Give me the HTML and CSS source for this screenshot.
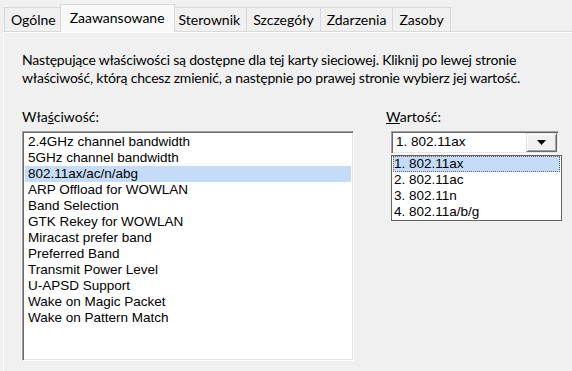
FILE: index.html
```html
<!DOCTYPE html>
<html lang="pl">
<head>
  <meta charset="UTF-8">
  <title>Właściwości karty sieciowej</title>
  <link rel="stylesheet" href="styles.css">
</head>
<body>
  <div class="tabs">
    <div class="tab">Ogólne</div>
    <div class="tab active">Zaawansowane</div>
    <div class="tab">Sterownik</div>
    <div class="tab">Szczegóły</div>
    <div class="tab">Zdarzenia</div>
    <div class="tab">Zasoby</div>
  </div>
  <div class="panel">
    <p class="intro">Następujące właściwości są dostępne dla tej karty sieciowej. Kliknij po lewej stronie właściwość, którą chcesz zmienić, a następnie po prawej stronie wybierz jej wartość.</p>
    <div class="columns">
      <div class="col-left">
        <div class="label">Wła<u>ś</u>ciwość:</div>
        <div class="listbox">
          <div class="item">2.4GHz channel bandwidth</div>
          <div class="item">5GHz channel bandwidth</div>
          <div class="item selected">802.11ax/ac/n/abg</div>
          <div class="item">ARP Offload for WOWLAN</div>
          <div class="item">Band Selection</div>
          <div class="item">GTK Rekey for WOWLAN</div>
          <div class="item">Miracast prefer band</div>
          <div class="item">Preferred Band</div>
          <div class="item">Transmit Power Level</div>
          <div class="item">U-APSD Support</div>
          <div class="item">Wake on Magic Packet</div>
          <div class="item">Wake on Pattern Match</div>
        </div>
      </div>
      <div class="col-right">
        <div class="label"><u>W</u>artość:</div>
        <div class="combo">
          <div class="combo-value">1. 802.11ax</div>
          <div class="combo-btn">
            <svg width="9" height="5" viewBox="0 0 9 5"><path d="M0 0h9L4.5 5z" fill="#000"/></svg>
          </div>
          <div class="dropdown">
            <div class="opt selected">1. 802.11ax</div>
            <div class="opt">2. 802.11ac</div>
            <div class="opt">3. 802.11n</div>
            <div class="opt">4. 802.11a/b/g</div>
          </div>
        </div>
      </div>
    </div>
  </div>
</body>
</html>
```

FILE: styles.css
```css
* {
  box-sizing: border-box;
}
body {
  margin: 0;
  background: #f0f0f0;
  color: #000;
  font-family: Lato, sans-serif;
  font-size: 14px;
  width: 572px;
  height: 371px;
  overflow: hidden;
}
.tabs {
  display: flex;
  align-items: flex-end;
  padding: 4px 0 0 4px;
  height: 31px;
}
.tab {
  height: 24px;
  padding: 0 6px;
  line-height: 24px;
  border: 1px solid #d9d9d9;
  border-bottom: none;
  border-left: none;
  background: #f0f0f0;
}
.tab:first-child {
  border-left: 1px solid #d9d9d9;
}
.tab.wide {
  padding: 0 7px;
}
.tab.active {
  height: 28px;
  margin: 0 -2px -1px -3px;
  padding: 0 9px;
  line-height: 25px;
  background: #f9f9f9;
  border-left: 1px solid #d9d9d9;
  position: relative;
  z-index: 1;
}
.panel {
  border-top: 1px solid #d9d9d9;
  border-left: 1px solid #fff;
  margin-left: 3px;
  box-shadow: inset 0 1px 0 #fff;
  height: 340px;
  padding: 19px 0 0 18px;
}
.intro {
  margin: 0;
  line-height: 18px;
  width: 530px;
  letter-spacing: -0.2px;
}
.columns {
  display: flex;
  gap: 32px;
  margin-top: 21px;
}
.col-left {
  width: 332px;
}
.col-right {
  width: 175px;
}
.label {
  line-height: 18px;
  margin-bottom: 5px;
}
.listbox {
  height: 230px;
  background: #fff;
  border-style: solid;
  border-width: 1px;
  border-color: #a0a0a0 #fff #fff #a0a0a0;
  box-shadow: inset 1px 1px 0 #696969, inset -1px -1px 0 #e3e3e3;
  padding: 2px 2px;
  font-family: 'Liberation Sans', Arial, sans-serif;
  font-size: 13.5px;
}
.item {
  height: 16px;
  line-height: 16px;
  padding-left: 3px;
}
.item.selected {
  background: #c4dcf8;
}
.combo {
  position: relative;
  margin-left: 5px;
  height: 23px;
  width: 168px;
  display: flex;
  background: #fff;
  border-style: solid;
  border-width: 1px;
  border-color: #a0a0a0 #fff #fff #a0a0a0;
  box-shadow: inset 1px 1px 0 #696969, inset -1px -1px 0 #e3e3e3;
  font-family: 'Liberation Sans', Arial, sans-serif;
  font-size: 13.5px;
}
.combo-value {
  flex: 1;
  line-height: 20px;
  padding-left: 4px;
}
.combo-btn {
  width: 31px;
  margin: 1px 1px 1px 0;
  background: #f0f0f0;
  border-style: solid;
  border-width: 1px;
  border-color: #e3e3e3 #696969 #696969 #e3e3e3;
  box-shadow: inset 1px 1px 0 #fff, inset -1px -1px 0 #a0a0a0;
  display: flex;
  align-items: center;
  justify-content: center;
}
.dropdown {
  position: absolute;
  top: 23px;
  left: -1px;
  width: 171px;
  background: #fff;
  border: 1px solid #646464;
  padding: 0 1px;
}
.opt {
  height: 16px;
  line-height: 16px;
  padding-left: 1px;
}
.opt.selected {
  background: #c4dcf8;
  outline: 1px dotted #646464;
  outline-offset: -1px;
}
```
